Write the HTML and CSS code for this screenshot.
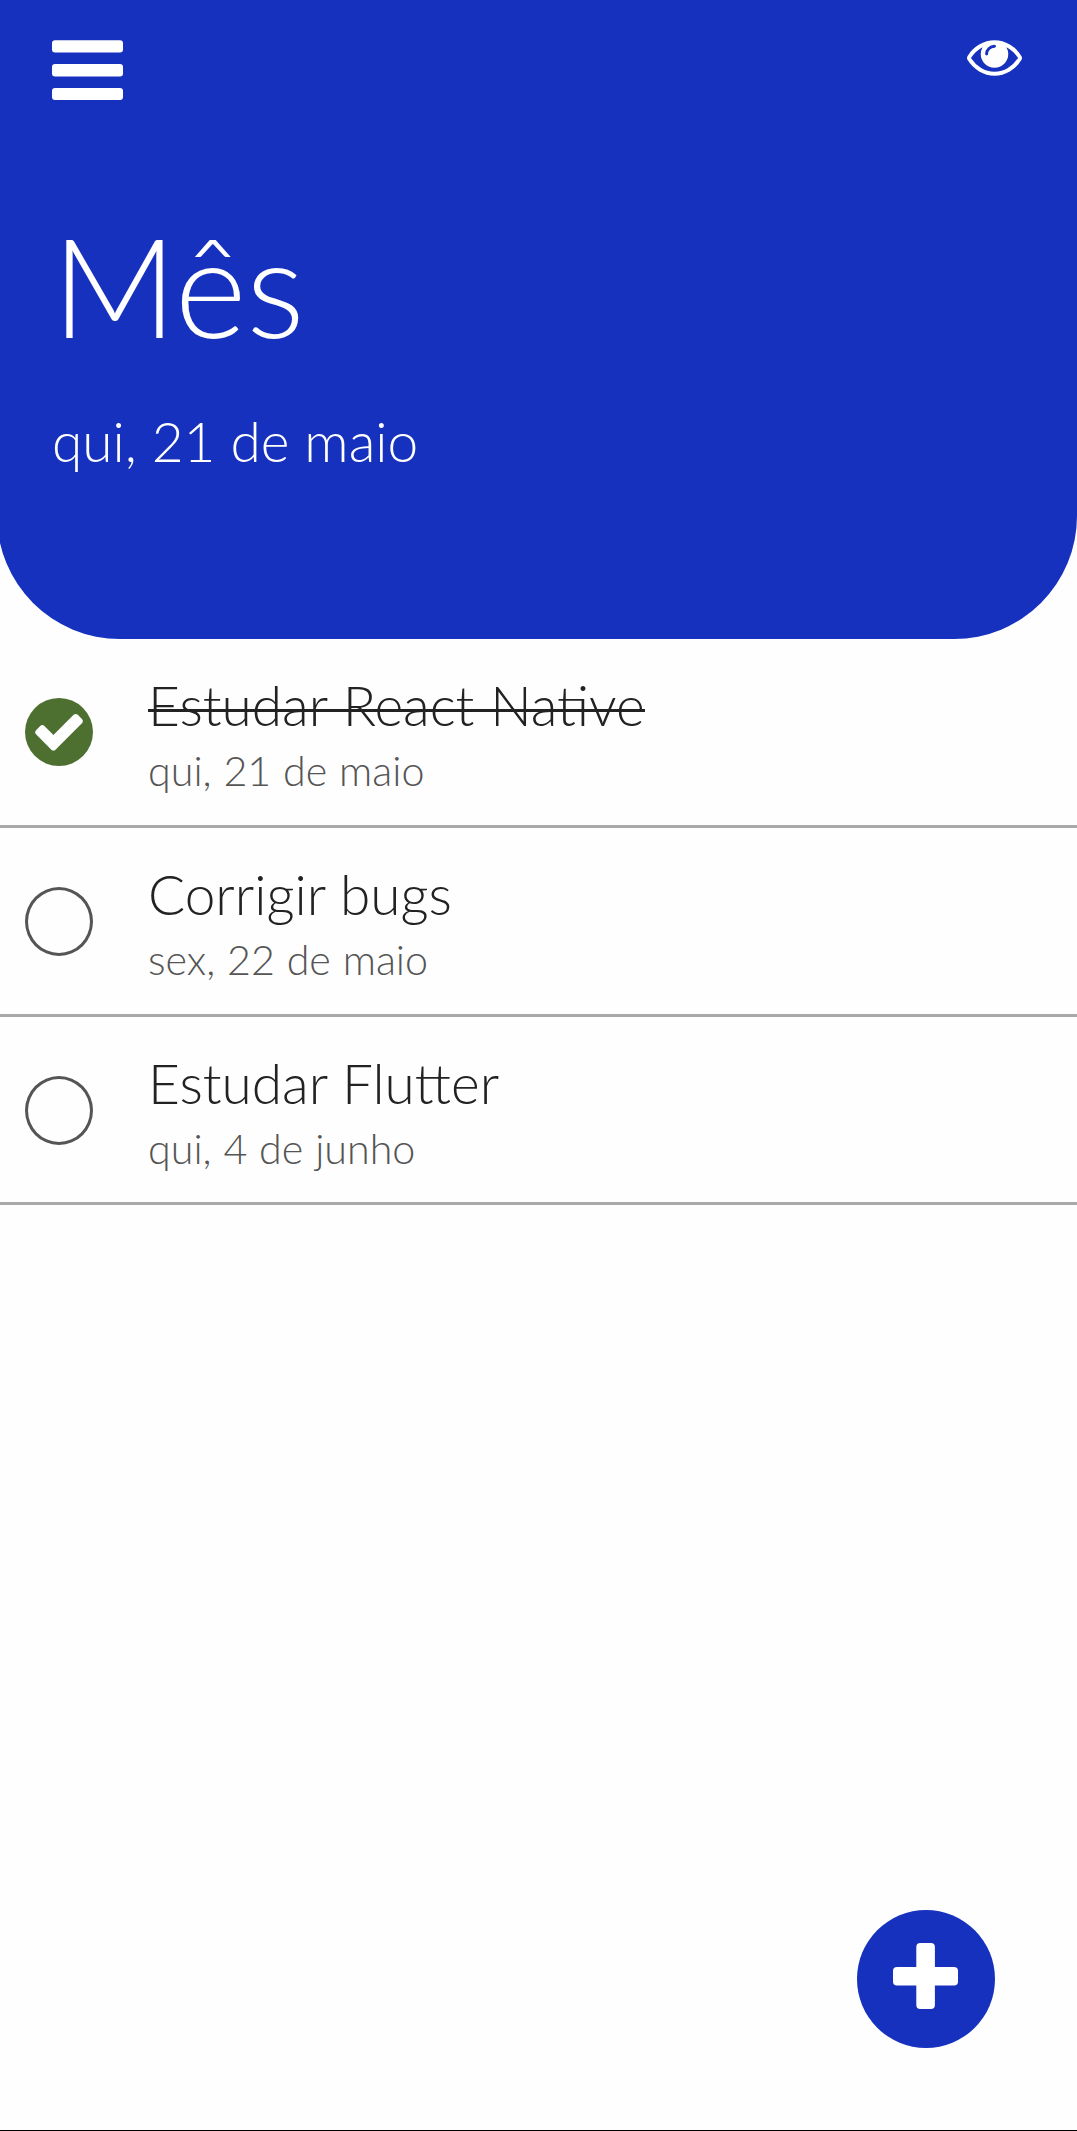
FILE: index.html
```html
<!DOCTYPE html>
<html lang="pt-BR">
<head>
<meta charset="utf-8">
<title>Mês</title>
<link rel="stylesheet" href="styles.css">
</head>
<body>
<div class="screen">
  <header class="header">
    <div class="toolbar">
      <svg class="menu" viewBox="0 0 71 60"><rect y="0.3" width="71" height="12.2" rx="3"/><rect y="24.1" width="71" height="12.4" rx="3"/><rect y="48" width="71" height="11.9" rx="3"/></svg>
      <svg class="eye" viewBox="0 384 1792 1152"><path d="M1664 960q-152-236-381-353q61 104 61 225q0 185-131.5 316.5t-316.5 131.5t-316.5-131.5t-131.5-316.5q0-121 61-225q-229 117-381 353q133 205 333.5 326.5t434.5 121.5t434.5-121.5t333.5-326.5zM944 576q0-20-14-34t-34-14q-125 0-214.5 89.5t-89.5 214.5q0 20 14 34t34 14t34-14t14-34q0-86 61-147t147-61q20 0 34-14t14-34zM1792 960q0 34-20 69q-140 230-376.5 368.5t-499.5 138.5t-499.5-139t-376.5-368q-20-35-20-69t20-69q140-229 376.5-368t499.5-139t499.5 139t376.5 368q20 35 20 69z"/></svg>
    </div>
    <h1 class="title">Mês</h1>
    <p class="subtitle">qui, 21 de maio</p>
  </header>
  <main class="tasks">
    <div class="task">
      <span class="check check-done"><svg class="tick" viewBox="121 302 1550 1220"><path d="M1671 566q0 40-28 68l-724 724-136 136q-28 28-68 28t-68-28l-136-136-362-362q-28-28-28-68t28-68l136-136q28-28 68-28t68 28l294 295 656-657q28-28 68-28t68 28l136 136q28 28 28 68z"/></svg></span>
      <div class="info"><span class="name name-done">Estudar React Native</span><span class="date">qui, 21 de maio</span></div>
    </div>
    <div class="task">
      <span class="check"></span>
      <div class="info"><span class="name">Corrigir bugs</span><span class="date">sex, 22 de maio</span></div>
    </div>
    <div class="task">
      <span class="check"></span>
      <div class="info"><span class="name">Estudar Flutter</span><span class="date">qui, 4 de junho</span></div>
    </div>
  </main>
  <button class="add" aria-label="Adicionar"><svg class="plus" viewBox="0 0 65 66"><rect x="23.3" width="18.6" height="66" rx="4"/><rect y="24" width="65" height="18.6" rx="4"/></svg></button>
</div>
</body>
</html>
```
FILE: styles.css
```css
body {
  margin: 0;
  background: #fefefe;
  font-family: Lato, sans-serif;
  font-weight: 300;
}

.screen {
  position: relative;
  box-sizing: border-box;
  height: 2131px;
  overflow: hidden;
  border-bottom: 1px solid #000;
}

.header {
  box-sizing: border-box;
  height: 639px;
  margin-left: -3px;
  padding: 40px 55px 0;
  border-radius: 0 0 123px 123px;
  background: #1631be;
  color: #fff;
}

.toolbar {
  display: flex;
  align-items: flex-start;
  justify-content: space-between;
  height: 162px;
}

.menu {
  width: 71px;
  height: 60px;
  fill: #fff;
}

.eye {
  width: 55px;
  height: 36px;
  fill: #fff;
}

.title {
  margin: 0;
  font-size: 137.5px;
  font-weight: 300;
  line-height: 165px;
}

.subtitle {
  margin: 41px 0 0;
  font-size: 55px;
  line-height: 66px;
}

.task {
  display: flex;
  align-items: center;
  box-sizing: border-box;
  height: 189px;
  padding-left: 25px;
  border-bottom: 3px solid #a9a9a9;
}

.task:last-child {
  height: 188px;
}

.check {
  display: flex;
  align-items: center;
  justify-content: center;
  box-sizing: border-box;
  width: 68px;
  height: 69px;
  border: 3px solid #555;
  border-radius: 50%;
}

.task:last-child .check {
  margin-top: 2px;
}

.check-done {
  height: 68px;
  border: 0;
  background: #4d7031;
}

.tick {
  width: 48px;
  height: 37.5px;
  fill: #fff;
}

.info {
  display: flex;
  flex-direction: column;
  align-items: flex-start;
  gap: 7px;
  margin-left: 55px;
  padding-top: 3px;
}

.name {
  color: #222;
  font-size: 55px;
  line-height: 66px;
}

.name-done {
  position: relative;
  word-spacing: 0.8px;
}

.name-done::after {
  content: "";
  position: absolute;
  top: 37px;
  right: 0;
  left: 0;
  height: 3px;
  background: #222;
}

.date {
  color: #555;
  font-size: 41.25px;
  line-height: 50px;
  word-spacing: 0.6px;
}

.add {
  position: absolute;
  right: 82px;
  bottom: 82px;
  display: flex;
  align-items: center;
  justify-content: center;
  width: 138px;
  height: 138px;
  padding: 0;
  border: 0;
  border-radius: 50%;
  background: #1631be;
}

.plus {
  width: 65px;
  height: 66px;
  margin: -6px 0 0 -1px;
  fill: #fff;
}
```
